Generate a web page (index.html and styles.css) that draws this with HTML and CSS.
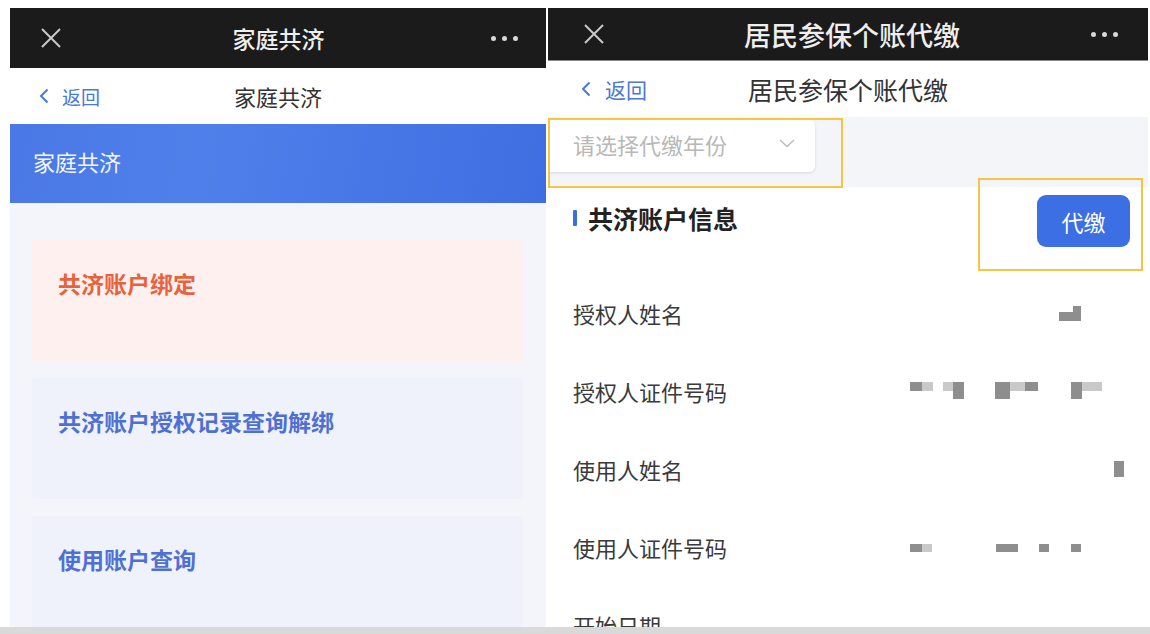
FILE: index.html
```html
<!DOCTYPE html>
<html lang="zh-CN">
<head>
    <meta charset="UTF-8">
    <meta name="viewport" content="width=device-width, initial-scale=1.0">
    <title>家庭共济 / 居民参保个账代缴</title>
    <link rel="stylesheet" href="styles.css">
</head>
<body>
    <div class="shots">
        <!-- left phone: 家庭共济 -->
        <div class="phone phone-left">
            <div class="topbar">
                <svg class="close" width="22" height="22" viewBox="0 0 22 22"><path d="M2 2 L20 20 M20 2 L2 20" stroke="#c9c9c9" stroke-width="2" fill="none"/></svg>
                <span class="topbar-title">家庭共济</span>
                <span class="dots"><i></i><i></i><i></i></span>
            </div>
            <div class="navbar">
                <a class="back"><svg width="10" height="16" viewBox="0 0 10 16"><path d="M8.5 1.5 L2 8 L8.5 14.5" stroke="#4a78d8" stroke-width="2" fill="none"/></svg>返回</a>
                <span class="nav-title">家庭共济</span>
            </div>
            <div class="banner">家庭共济</div>
            <div class="menu">
                <div class="card card-orange">共济账户绑定</div>
                <div class="card card-blue">共济账户授权记录查询解绑</div>
                <div class="card card-blue">使用账户查询</div>
            </div>
        </div>

        <!-- right phone: 居民参保个账代缴 -->
        <div class="phone phone-right">
            <div class="topbar topbar-short">
                <svg class="close" width="22" height="22" viewBox="0 0 22 22"><path d="M2 2 L20 20 M20 2 L2 20" stroke="#c9c9c9" stroke-width="2" fill="none"/></svg>
                <span class="topbar-title big">居民参保个账代缴</span>
                <span class="dots"><i></i><i></i><i></i></span>
            </div>
            <div class="navbar navbar-right">
                <a class="back"><svg width="10" height="16" viewBox="0 0 10 16"><path d="M8.5 1.5 L2 8 L8.5 14.5" stroke="#4a78d8" stroke-width="2" fill="none"/></svg>返回</a>
                <span class="nav-title big">居民参保个账代缴</span>
            </div>
            <div class="year-bar">
                <div class="select">
                    <span>请选择代缴年份</span>
                    <svg width="16" height="9" viewBox="0 0 16 9"><path d="M1 1 L8 7.5 L15 1" stroke="#bcbcbc" stroke-width="1.5" fill="none"/></svg>
                </div>
            </div>
            <div class="info">
                <div class="info-head">
                    <h2><span class="mark"></span>共济账户信息</h2>
                    <button class="pay">代缴</button>
                </div>
                <div class="row">
                    <span class="label">授权人姓名</span>
                    <span class="masked m-name1">
                        <span class="stack"><i class="b w8 h6"></i><i class="b w22 h9"></i></span>
                    </span>
                </div>
                <div class="row">
                    <span class="label">授权人证件号码</span>
                    <span class="masked m-id1">
                        <i class="b w12 h9"></i><i class="b w11 h9 lt"></i>
                        <i class="b w10 h9 lt ml10"></i><i class="b w11 h17"></i>
                        <i class="b w15 h17 ml31"></i><i class="b w15 h9 lt"></i><i class="b w13 h9"></i>
                        <i class="b w11 h17 ml33"></i><i class="b w20 h9 lt"></i>
                    </span>
                </div>
                <div class="row">
                    <span class="label">使用人姓名</span>
                    <span class="masked m-name2"><i class="b w10 h16"></i></span>
                </div>
                <div class="row">
                    <span class="label">使用人证件号码</span>
                    <span class="masked m-id2">
                        <i class="b w12 h8"></i><i class="b w10 h8 lt"></i>
                        <i class="b w22 h8 ml64"></i><i class="b w10 h8 ml21"></i><i class="b w10 h8 ml22"></i>
                    </span>
                </div>
                <div class="row">
                    <span class="label">开始日期</span>
                    <span class="masked m-date"><i class="b w10 h6"></i><i class="b w10 h6 ml23"></i></span>
                </div>
            </div>
            <div class="note note-select"></div>
            <div class="note note-pay"></div>
        </div>
    </div>
    <div class="bottom-bar"></div>
</body>
</html>
```

FILE: styles.css
```css
* {
    box-sizing: border-box;
}
body {
    margin: 0;
    background: #fff;
    font-family: "Noto Sans CJK SC", "Noto Sans", sans-serif;
    color: #333;
}
.shots {
    display: flex;
    gap: 2px;
    padding: 8px 0 0 10px;
    height: 627px;
    overflow: hidden;
}
.phone {
    position: relative;
    display: flex;
    flex-direction: column;
    overflow: hidden;
}
.phone > * {
    flex-shrink: 0;
}
.phone-left {
    width: 536px;
    background: #f3f5fa;
}
.phone-right {
    width: 600px;
    background: #fff;
}
.bottom-bar {
    height: 7px;
    background: #d9d9d9;
}

/* black app bar */
.topbar {
    height: 60px;
    background: #1b1b1b;
    display: flex;
    align-items: center;
    justify-content: space-between;
    padding: 0 28px 0 30px;
}
.topbar-short {
    height: 53px;
    border-bottom: 1px solid #8a8a8a;
    padding: 0 30px 0 35px;
}
.topbar-title {
    color: #eee;
    font-size: 23px;
    font-weight: 500;
    margin-left: 4px;
}
.topbar-title.big {
    font-size: 27px;
    margin-left: 8px;
}
.dots {
    display: flex;
    gap: 6px;
}
.dots i {
    width: 5px;
    height: 5px;
    border-radius: 50%;
    background: #d8d8d8;
}

/* white nav */
.navbar {
    height: 56px;
    background: #fff;
    display: flex;
    align-items: center;
    position: relative;
    padding-left: 29px;
}
.back {
    display: flex;
    align-items: center;
    gap: 13px;
    color: #4a78d8;
    font-size: 19px;
}
.nav-title {
    position: absolute;
    left: 0;
    right: 0;
    text-align: center;
    font-size: 22px;
    color: #333;
    pointer-events: none;
}
.navbar-right {
    padding-left: 33px;
}
.navbar-right .back {
    gap: 14px;
    font-size: 21px;
}
.nav-title.big {
    font-size: 25px;
}

/* left page */
.banner {
    height: 79px;
    background: linear-gradient(100deg, #4a78e6 0%, #4f80ea 35%, #3f6ee2 100%);
    color: #f4f6ff;
    font-size: 22px;
    display: flex;
    align-items: center;
    padding: 0 0 5px 23px;
}
.menu {
    display: flex;
    flex-direction: column;
    gap: 17px;
    padding: 37px 23px 0 22px;
}
.card {
    height: 121px;
    padding: 26px 0 0 26px;
    font-size: 23px;
    font-weight: 700;
    border-radius: 4px;
}
.card-orange {
    background: #fdf0ee;
    color: #e8633d;
}
.card-blue {
    background: #eff2fb;
    color: #4f70d3;
}

/* right page */
.year-bar {
    height: 70px;
    background: #f4f5f8;
    padding-top: 3px;
}
.select {
    width: 267px;
    height: 52px;
    background: #fff;
    border-radius: 0 6px 6px 0;
    box-shadow: 0 1px 3px rgba(0, 0, 0, 0.12);
    display: flex;
    align-items: center;
    justify-content: space-between;
    padding: 0 20px 5px 25px;
    font-size: 22px;
    color: #b8b8b8;
}
.info {
    padding: 8px 18px 0 25px;
}
.info-head {
    display: flex;
    align-items: center;
    justify-content: space-between;
}
.info-head h2 {
    margin: 0;
    display: flex;
    align-items: center;
    gap: 11px;
    font-size: 25px;
    font-weight: 700;
    color: #222;
    position: relative;
    top: -3px;
}
.mark {
    width: 4px;
    height: 16px;
    border-radius: 1px;
    background: #3b6fe0;
}
.pay {
    width: 93px;
    height: 52px;
    border: none;
    border-radius: 9px;
    background: #3b6fe3;
    color: #fff;
    font-family: inherit;
    font-size: 22px;
}
.row {
    height: 78px;
    display: flex;
    align-items: center;
    justify-content: space-between;
}
.info-head + .row {
    margin-top: 27px;
}
.label {
    font-size: 22px;
    color: #3a3a3a;
}

/* redacted values */
.masked {
    display: flex;
    align-items: flex-start;
}
.m-name1 { margin-right: 49px; }
.m-id1 { margin-right: 28px; margin-top: -2px; }
.m-name2 { margin-right: 6px; }
.m-id2 { margin-right: 49px; margin-top: 2px; }
.m-date { margin-right: 37px; align-self: flex-end; }
.stack {
    display: flex;
    flex-direction: column;
    align-items: flex-end;
}
.b {
    display: block;
    background: #8e8e8e;
}
.b.lt {
    background: #c9c9c9;
}
.w8 { width: 8px; }
.w10 { width: 10px; }
.w11 { width: 11px; }
.w12 { width: 12px; }
.w13 { width: 13px; }
.w15 { width: 15px; }
.w20 { width: 20px; }
.w22 { width: 22px; }
.h6 { height: 6px; }
.h8 { height: 8px; }
.h9 { height: 9px; }
.h16 { height: 16px; }
.h17 { height: 17px; }
.ml10 { margin-left: 10px; }
.ml21 { margin-left: 21px; }
.ml22 { margin-left: 22px; }
.ml23 { margin-left: 23px; }
.ml31 { margin-left: 31px; }
.ml33 { margin-left: 33px; }
.ml64 { margin-left: 64px; }

/* yellow annotation boxes */
.note {
    position: absolute;
    border: 2px solid #f6c545;
    pointer-events: none;
}
.note-select {
    left: 0;
    top: 110px;
    width: 295px;
    height: 70px;
}
.note-pay {
    left: 430px;
    top: 170px;
    width: 165px;
    height: 93px;
}
```
